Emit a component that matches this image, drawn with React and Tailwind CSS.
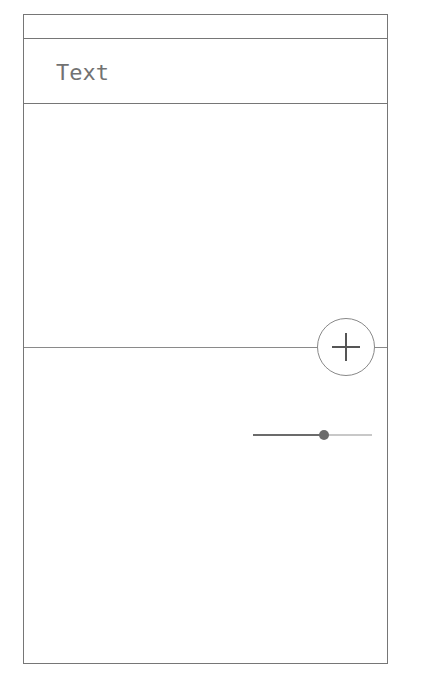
const App = () => {
  return (
    <div className="min-h-screen bg-white pt-[14px] pl-[23px]">
      <div className="flex h-[650px] w-[365px] flex-col border border-[#767676]">
        {/* top strip */}
        <div className="h-[24px] border-b border-[#767676]"></div>

        {/* text row */}
        <div className="flex h-[65px] items-center border-b border-[#767676] pl-[32px] pt-[3px]">
          <span className="font-['DejaVu_Sans_Mono',monospace] text-[22px] leading-none text-[#727272]">
            Text
          </span>
        </div>

        {/* upper panel */}
        <div className="h-[243px]"></div>

        {/* divider with add button */}
        <div className="relative h-px bg-[#8a8a8a]">
          <button className="absolute right-[12px] top-[-29px] flex h-[58px] w-[58px] items-center justify-center rounded-full border border-[#888888] bg-white">
            <svg width="30" height="30" viewBox="0 0 30 30">
              <path d="M15 1v28M1 15h28" stroke="#555555" strokeWidth="2" fill="none" />
            </svg>
          </button>
        </div>

        {/* lower panel */}
        <div className="flex justify-end pr-[15px] pt-[82px]">
          <div className="relative flex h-[10px] w-[119px] items-center">
            <div className="h-[2px] w-[71px] bg-[#6b6b6b]"></div>
            <div className="h-[2px] flex-1 bg-[#c8c8c8]"></div>
            <div className="absolute left-[66px] h-[10px] w-[10px] rounded-full bg-[#6b6b6b]"></div>
          </div>
        </div>
      </div>
    </div>
  )
}

export default App
